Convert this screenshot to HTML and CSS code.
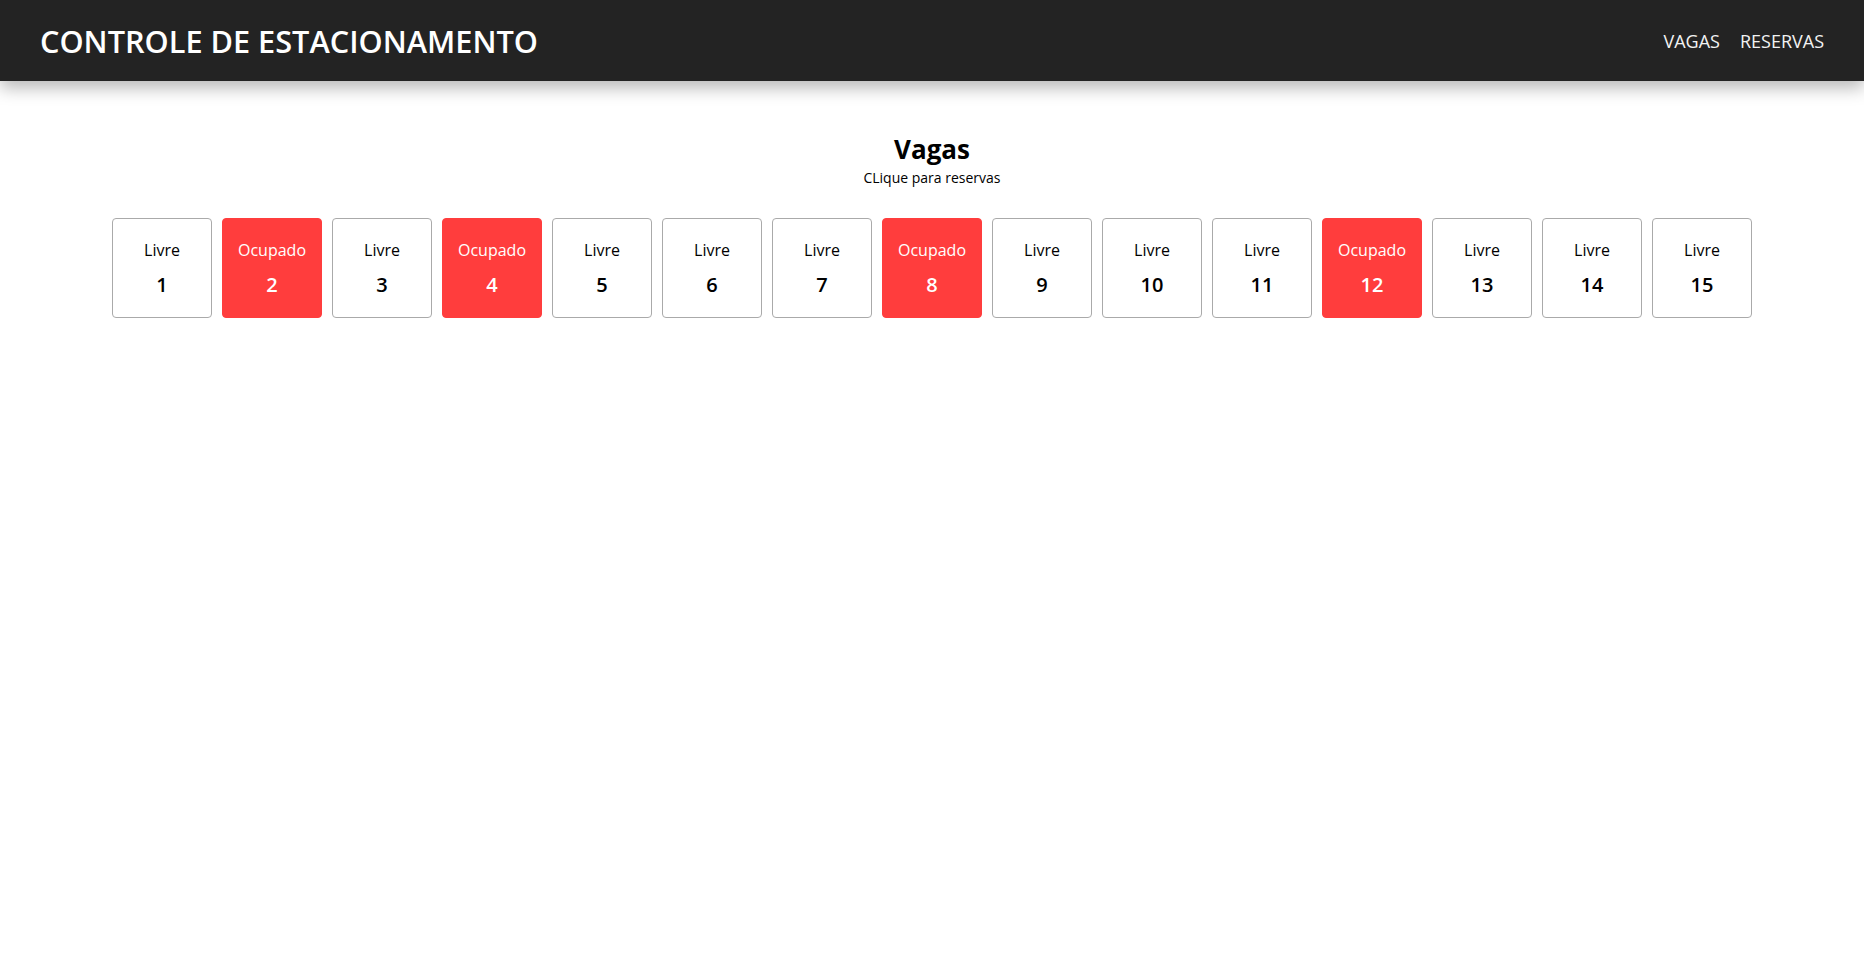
FILE: index.html
```html
<!DOCTYPE html>
<html lang="pt">
<head>
<meta charset="utf-8">
<title>Controle de Estacionamento</title>
<link rel="stylesheet" href="styles.css">
</head>
<body>
<header class="topbar">
  <div class="brand">CONTROLE DE ESTACIONAMENTO</div>
  <nav class="nav">
    <a class="nav-link" href="#">VAGAS</a>
    <a class="nav-link" href="#">RESERVAS</a>
  </nav>
</header>
<main class="content">
  <h1 class="title">Vagas</h1>
  <p class="subtitle">CLique para reservas</p>
  <div class="spots">
    <div class="spot"><span class="status">Livre</span><span class="num">1</span></div>
    <div class="spot busy"><span class="status">Ocupado</span><span class="num">2</span></div>
    <div class="spot"><span class="status">Livre</span><span class="num">3</span></div>
    <div class="spot busy"><span class="status">Ocupado</span><span class="num">4</span></div>
    <div class="spot"><span class="status">Livre</span><span class="num">5</span></div>
    <div class="spot"><span class="status">Livre</span><span class="num">6</span></div>
    <div class="spot"><span class="status">Livre</span><span class="num">7</span></div>
    <div class="spot busy"><span class="status">Ocupado</span><span class="num">8</span></div>
    <div class="spot"><span class="status">Livre</span><span class="num">9</span></div>
    <div class="spot"><span class="status">Livre</span><span class="num">10</span></div>
    <div class="spot"><span class="status">Livre</span><span class="num">11</span></div>
    <div class="spot busy"><span class="status">Ocupado</span><span class="num">12</span></div>
    <div class="spot"><span class="status">Livre</span><span class="num">13</span></div>
    <div class="spot"><span class="status">Livre</span><span class="num">14</span></div>
    <div class="spot"><span class="status">Livre</span><span class="num">15</span></div>
  </div>
</main>
</body>
</html>
```

FILE: styles.css
```css
* { box-sizing: border-box; }
html, body { margin: 0; padding: 0; background: #fff; }
body {
  font-family: "Open Sans", "Noto Sans", sans-serif;
  color: #000;
}
.topbar {
  height: 81px;
  background: #232323;
  display: flex;
  align-items: center;
  justify-content: space-between;
  padding: 0 40px 0 40px;
  box-shadow: 0 7px 16px rgba(0, 0, 0, 0.28);
  position: relative;
}
.brand {
  color: #fff;
  font-size: 30.7px;
  font-weight: 600;
}
.nav { display: flex; gap: 20px; }
.nav-link {
  color: #f2f2f2;
  text-decoration: none;
  font-size: 18px;
}
.content {
  display: flex;
  flex-direction: column;
  align-items: center;
  padding-top: 50px;
}
.title {
  margin: 0;
  font-size: 26px;
  font-weight: 700;
  line-height: 36px;
}
.subtitle {
  margin: 1px 0 0;
  font-size: 14px;
  line-height: 19px;
}
.spots {
  display: flex;
  margin-top: 31px;
}
.spot {
  width: 100px;
  height: 100px;
  margin: 0 5px;
  border: 1px solid #aaa;
  border-radius: 4px;
  display: flex;
  flex-direction: column;
  align-items: center;
  justify-content: center;
  gap: 10px;
  padding-top: 2px;
  color: #000;
}
.spot.busy {
  background: #ff3d3d;
  border-color: #ff3d3d;
  color: #fff;
}
.status { font-size: 16px; line-height: 22px; }
.num { font-size: 20px; font-weight: 600; line-height: 28px; }
```
